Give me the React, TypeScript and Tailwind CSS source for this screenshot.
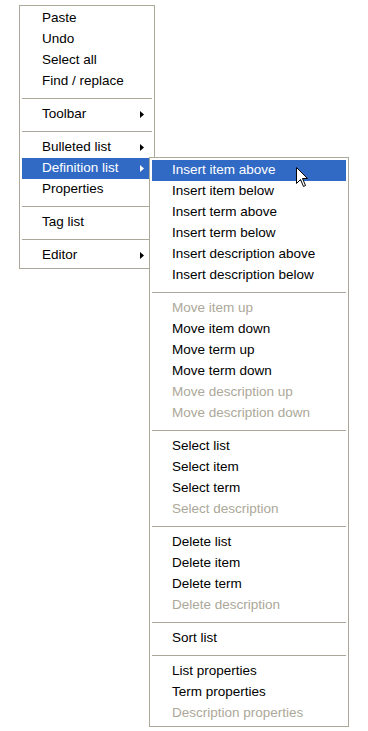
import type { ReactNode } from 'react'

type Item = { label: string; disabled?: boolean; sub?: boolean } | 'sep'

const MAIN: Item[] = [
  { label: 'Paste' },
  { label: 'Undo' },
  { label: 'Select all' },
  { label: 'Find / replace' },
  'sep',
  { label: 'Toolbar', sub: true },
  'sep',
  { label: 'Bulleted list', sub: true },
  { label: 'Definition list', sub: true },
  { label: 'Properties' },
  'sep',
  { label: 'Tag list' },
  'sep',
  { label: 'Editor', sub: true },
]

const DEFLIST: Item[] = [
  { label: 'Insert item above' },
  { label: 'Insert item below' },
  { label: 'Insert term above' },
  { label: 'Insert term below' },
  { label: 'Insert description above' },
  { label: 'Insert description below' },
  'sep',
  { label: 'Move item up', disabled: true },
  { label: 'Move item down' },
  { label: 'Move term up' },
  { label: 'Move term down' },
  { label: 'Move description up', disabled: true },
  { label: 'Move description down', disabled: true },
  'sep',
  { label: 'Select list' },
  { label: 'Select item' },
  { label: 'Select term' },
  { label: 'Select description', disabled: true },
  'sep',
  { label: 'Delete list' },
  { label: 'Delete item' },
  { label: 'Delete term' },
  { label: 'Delete description', disabled: true },
  'sep',
  { label: 'Sort list' },
  'sep',
  { label: 'List properties' },
  { label: 'Term properties' },
  { label: 'Description properties', disabled: true },
]

function Arrow({ white }: { white?: boolean }) {
  return (
    <svg width="4" height="7" viewBox="0 0 4 7" className="flex-none">
      <path d="M0 0 L4 3.5 L0 7 Z" fill={white ? '#ffffff' : '#000000'} />
    </svg>
  )
}

// mouse pointer hovering the first submenu entry
function Cursor() {
  return (
    <svg width="13" height="21" viewBox="0 0 13 21" className="absolute left-[144px] top-[7px]">
      <path
        d="M0.5 0.5 L0.5 16.5 L4.5 12.5 L7.5 19.5 L9.5 18.5 L6.5 11.5 L11.5 11.5 Z"
        fill="#ffffff"
        stroke="#000000"
        strokeWidth="1"
      />
    </svg>
  )
}

function Menu({ items, width, active, children }: {
  items: Item[]
  width: string
  active?: string
  children?: ReactNode
}) {
  return (
    <div className={`${width} bg-white border border-[#aca899] p-[2px] flex flex-col`}>
      {items.map((it, i) => {
        if (it === 'sep') {
          return (
            <div key={i} className="h-[12px] flex items-center">
              <div className="h-px w-full bg-[#aca899]" />
            </div>
          )
        }
        const on = it.label === active
        return (
          <div
            key={i}
            className={`relative h-[21px] flex items-center pl-[20px] pr-[8px] ${
              on ? 'bg-[#316ac5] text-white' : it.disabled ? 'text-[#aca899]' : 'text-black'
            }`}
          >
            <span className="flex-1 whitespace-nowrap">{it.label}</span>
            {it.sub && <Arrow white={on} />}
            {on && children}
          </div>
        )
      })}
    </div>
  )
}

export default function App() {
  return (
    <div className="w-[368px] h-[731px] bg-white text-[13.5px] font-['Liberation_Sans',Arial,sans-serif] pt-[5px] pl-[19px]">
      <div className="relative w-[136px]">
        <Menu items={MAIN} width="w-[136px]" active="Definition list">
          <div className="absolute left-[127px] top-[-1px] z-10">
            <Menu items={DEFLIST} width="w-[200px]" active="Insert item above">
              <Cursor />
            </Menu>
          </div>
        </Menu>
      </div>
    </div>
  )
}
